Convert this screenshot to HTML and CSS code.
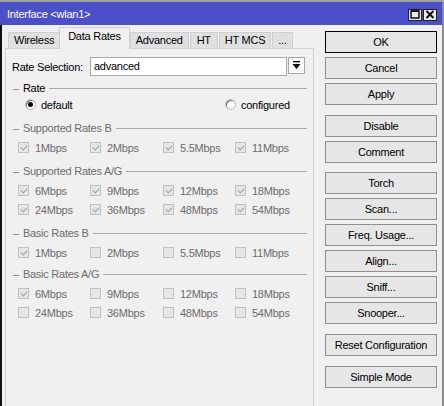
FILE: index.html
```html
<!DOCTYPE html>
<html>
<head>
<meta charset="utf-8">
<link rel="stylesheet" href="styles.css">
</head>
<body>
<div class="window">
  <div class="titlebar">
    <span class="title">Interface &lt;wlan1&gt;</span>
    <div class="tbtns">
      <span class="tbtn"><svg width="10" height="9" viewBox="0 0 10 9"><rect x="1" y="1" width="8" height="7" fill="none" stroke="#000" stroke-width="1.4"/><rect x="1" y="0.5" width="8" height="1.5" fill="#000"/></svg></span>
      <span class="tbtn"><svg width="10" height="9" viewBox="0 0 10 9"><path d="M1.5 1 L8.5 8 M8.5 1 L1.5 8" stroke="#000" stroke-width="1.8"/></svg></span>
    </div>
  </div>
  <div class="main">
    <div class="left">
      <div class="tabs">
        <div class="tab">Wireless</div>
        <div class="tab active">Data Rates</div>
        <div class="tab">Advanced</div>
        <div class="tab wide">HT</div>
        <div class="tab">HT MCS</div>
        <div class="tab">...</div>
      </div>
      <div class="panel">
        <div class="selrow">
          <span class="lbl">Rate Selection:</span>
          <span class="input">advanced</span>
          <span class="dd"><svg width="9" height="9" viewBox="0 0 9 9"><rect x="1" y="0" width="7" height="1.3" fill="#000"/><path d="M0.5 3 L8.5 3 L4.5 8 Z" fill="#000"/></svg></span>
        </div>

        <div class="group g-rate"><span class="dash">–</span><span class="gtitle">Rate</span><span class="gline"></span></div>
        <div class="radios">
          <span class="radio r-default"><span class="dot on"></span>default</span>
          <span class="radio r-conf"><span class="dot"></span>configured</span>
        </div>

        <div class="group g-mid"><span class="dash">–</span><span class="gtitle">Supported Rates B</span><span class="gline"></span></div>
        <div class="cbrow">
          <span class="cb"><span class="box checked"></span>1Mbps</span>
          <span class="cb"><span class="box checked"></span>2Mbps</span>
          <span class="cb"><span class="box checked"></span>5.5Mbps</span>
          <span class="cb"><span class="box checked"></span>11Mbps</span>
        </div>

        <div class="group g-mid"><span class="dash">–</span><span class="gtitle">Supported Rates A/G</span><span class="gline"></span></div>
        <div class="cbrow">
          <span class="cb"><span class="box checked"></span>6Mbps</span>
          <span class="cb"><span class="box checked"></span>9Mbps</span>
          <span class="cb"><span class="box checked"></span>12Mbps</span>
          <span class="cb"><span class="box checked"></span>18Mbps</span>
        </div>
        <div class="cbrow">
          <span class="cb"><span class="box checked"></span>24Mbps</span>
          <span class="cb"><span class="box checked"></span>36Mbps</span>
          <span class="cb"><span class="box checked"></span>48Mbps</span>
          <span class="cb"><span class="box checked"></span>54Mbps</span>
        </div>

        <div class="group g-mid"><span class="dash">–</span><span class="gtitle">Basic Rates B</span><span class="gline"></span></div>
        <div class="cbrow">
          <span class="cb"><span class="box checked"></span>1Mbps</span>
          <span class="cb"><span class="box"></span>2Mbps</span>
          <span class="cb"><span class="box"></span>5.5Mbps</span>
          <span class="cb"><span class="box"></span>11Mbps</span>
        </div>

        <div class="group g-last"><span class="dash">–</span><span class="gtitle">Basic Rates A/G</span><span class="gline"></span></div>
        <div class="cbrow">
          <span class="cb"><span class="box checked"></span>6Mbps</span>
          <span class="cb"><span class="box"></span>9Mbps</span>
          <span class="cb"><span class="box"></span>12Mbps</span>
          <span class="cb"><span class="box"></span>18Mbps</span>
        </div>
        <div class="cbrow">
          <span class="cb"><span class="box"></span>24Mbps</span>
          <span class="cb"><span class="box"></span>36Mbps</span>
          <span class="cb"><span class="box"></span>48Mbps</span>
          <span class="cb"><span class="box"></span>54Mbps</span>
        </div>
      </div>
    </div>
    <div class="right">
      <div class="btn default">OK</div>
      <div class="btn">Cancel</div>
      <div class="btn">Apply</div>
      <div class="btn sep">Disable</div>
      <div class="btn">Comment</div>
      <div class="btn sep2">Torch</div>
      <div class="btn">Scan...</div>
      <div class="btn">Freq. Usage...</div>
      <div class="btn">Align...</div>
      <div class="btn">Sniff...</div>
      <div class="btn">Snooper...</div>
      <div class="btn sep">Reset Configuration</div>
      <div class="btn sep">Simple Mode</div>
    </div>
  </div>
</div>
</body>
</html>
```

FILE: styles.css
```css
* { box-sizing: border-box; }
html, body { margin: 0; padding: 0; }
body {
  width: 444px;
  height: 406px;
  overflow: hidden;
  background: #f0f0f0;
  font-family: "Liberation Sans", Arial, sans-serif;
  font-size: 11px;
  letter-spacing: -0.25px;
  color: #000;
}
.window {
  width: 444px;
  height: 406px;
  border-top: 2px solid #a0a0a0;
  display: flex;
  flex-direction: column;
}
.titlebar {
  height: 23px;
  background: #4b4fc8;
  color: #fff;
  display: flex;
  align-items: center;
  justify-content: space-between;
  padding: 0 5px 0 7px;
  border-right: 2px solid #8a8a8a;
}
.title { font-size: 11px; padding-top: 1px; }
.tbtns { display: flex; gap: 1px; padding-top: 2px; }
.tbtn {
  width: 14px;
  height: 12px;
  background: #e8e8e8;
  border: 1px solid #202020;
  display: flex;
  align-items: center;
  justify-content: center;
}
.tbtn svg { display: block; }
.main {
  flex: 1;
  display: flex;
  border-left: 2px solid #101010;
  border-right: 2px solid #8a8a8a;
  min-height: 0;
}
.left {
  width: 309px;
  margin-left: 3px;
  display: flex;
  flex-direction: column;
}
.tabs {
  height: 23px;
  display: flex;
  align-items: flex-end;
  padding-left: 3px;
  gap: 1px;
}
.tab {
  height: 16px;
  line-height: 15px;
  padding: 0 5px;
  background: #e0e0e0;
  border: 1px solid #d0d0d0;
  border-bottom: none;
  color: #000;
  white-space: nowrap;
}
.tab.wide { padding: 0 6px; }
.tab.active {
  height: 22px;
  line-height: 17px;
  padding: 0 8px;
  margin: 0 -1px -1px -2px;
  background: #f0f0f0;
  border-color: #d0d0d0;
  position: relative;
  z-index: 1;
}
.panel {
  flex: 1;
  border: 1px solid #d0d0d0;
  border-bottom: none;
  padding: 8px 6px 0 6px;
  display: flex;
  flex-direction: column;
}
.selrow {
  height: 19px;
  display: flex;
  align-items: center;
}
.lbl { width: 78px; }
.input {
  width: 197px;
  height: 19px;
  border: 1px solid #a8a8a8;
  background: #fff;
  line-height: 17px;
  padding-left: 3px;
}
.dd {
  width: 17px;
  height: 17px;
  margin-left: 1px;
  align-self: flex-start;
  border: 1px solid #a8a8a8;
  background: #fdfdfd;
  display: flex;
  align-items: center;
  justify-content: center;
}
.dd svg { display: block; }
.group {
  height: 14px;
  display: flex;
  align-items: center;
  color: #6d6d6d;
  padding-left: 1px;
}
.g-rate { margin-top: 5px; color: #000; }
.g-mid { margin-top: 7px; }
.g-last { margin-top: 5px; }
.dash { color: #808080; margin-right: 4px; }
.gtitle { white-space: nowrap; }
.gline {
  flex: 1;
  height: 1px;
  background: #a8a8a8;
  margin-left: 4px;
}
.radios {
  height: 19px;
  display: flex;
  align-items: center;
}
.radio { display: flex; align-items: center; }
.r-default { margin-left: 13px; width: 200px; }
.dot {
  width: 11px;
  height: 11px;
  border-radius: 50%;
  background: #fff;
  border: 1px solid #b8b8b8;
  box-shadow: inset 1px 1px 0 #707070;
  margin-right: 5px;
  position: relative;
}
.dot.on::after {
  content: "";
  position: absolute;
  left: 2px;
  top: 2px;
  width: 5px;
  height: 5px;
  border-radius: 50%;
  background: #000;
}
.cbrow {
  height: 19px;
  display: grid;
  grid-template-columns: 72px 73px 72px 72px;
  padding-left: 6px;
  align-items: center;
}
.g-mid + .cbrow, .g-last + .cbrow { margin-top: 3px; }
.cb {
  display: flex;
  align-items: center;
  color: #6d6d6d;
}
.box {
  width: 11px;
  height: 11px;
  border: 1px solid #c0c0c0;
  background: #e6e6e6;
  margin-right: 6px;
  position: relative;
}
.box.checked::after {
  content: "";
  position: absolute;
  left: 2px;
  top: 1px;
  width: 5px;
  height: 3px;
  border-left: 1.5px solid #a0a0a0;
  border-bottom: 1.5px solid #a0a0a0;
  transform: translate(0, 1px) rotate(-45deg);
}
.right {
  margin-left: 11px;
  padding-top: 6px;
  width: 112px;
  display: flex;
  flex-direction: column;
  gap: 4px;
}
.btn {
  height: 22px;
  border: 1px solid #8f8f8f;
  background: #e6e6e6;
  text-align: center;
  line-height: 20px;
  color: #000;
  white-space: nowrap;
}
.btn.default { border-color: #000; }
.btn.sep { margin-top: 6px; }
.btn.sep2 { margin-top: 5px; }
```
